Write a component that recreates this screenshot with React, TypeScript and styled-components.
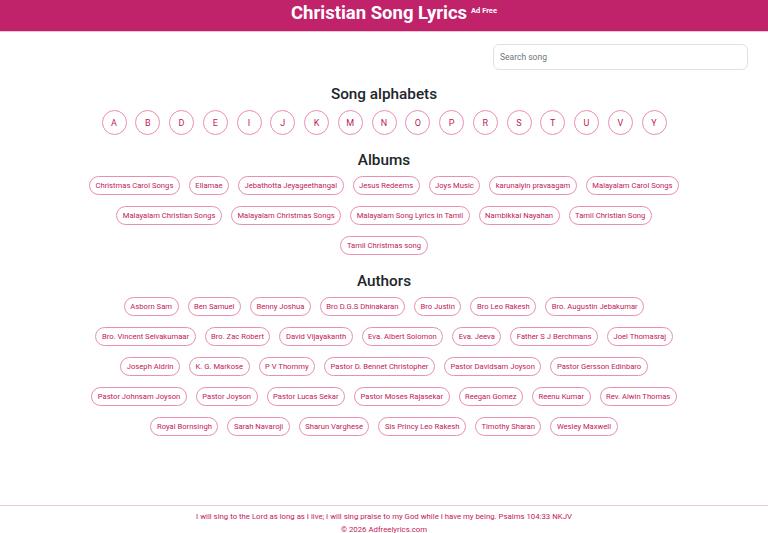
import React from "react";
import styled, { createGlobalStyle } from "styled-components";

const Global = createGlobalStyle`
  html, body { margin: 0; padding: 0; background: #fff; }
  body { font-family: Roboto, "Noto Sans", sans-serif; color: #212529; }
  * { box-sizing: border-box; }
`;

const PINK = "#c1236a";
const TEXT_PINK = "#c2185b";
const PINK_BORDER = "#e98fb5";

const Page = styled.div`
  display: flex;
  flex-direction: column;
  width: 768px;
`;

const Header = styled.header`
  height: 32px;
  background: ${PINK};
  border-bottom: 1px solid #f5c2d6;
  display: flex;
  justify-content: center;
  align-items: flex-start;
  padding-left: 20px;
  padding-top: 3px;
`;

const Title = styled.h1`
  margin: 0;
  color: #fff;
  font-family: Roboto, sans-serif;
  font-weight: 700;
  font-size: 18.5px;
  line-height: 20px;
`;

const Sup = styled.sup`
  font-size: 7.5px;
  font-weight: 700;
  vertical-align: top;
  position: relative;
  top: -2px;
  margin-left: 4px;
`;

const Main = styled.main`
  display: flex;
  flex-direction: column;
  align-items: center;
  padding: 12px 20px 69px;
`;

const SearchRow = styled.div`
  align-self: stretch;
  display: flex;
  justify-content: flex-end;
`;

const SearchInput = styled.input`
  width: 255px;
  height: 26px;
  border: 1px solid #dee2e6;
  border-radius: 6px;
  padding: 0 6px;
  font-family: Roboto, sans-serif;
  font-size: 8.5px;
  color: #333;
  outline: none;
  &::placeholder { color: #6c757d; }
`;

const Heading = styled.h2<{ $top: number }>`
  margin: ${(p) => p.$top}px 0 6px;
  font-family: Roboto, sans-serif;
  font-weight: 500;
  font-size: 15.3px;
  line-height: 20px;
  color: #212529;
`;

const CircleRow = styled.div`
  display: flex;
  gap: 8.75px;
  justify-content: center;
`;

const Circle = styled.a`
  width: 25px;
  height: 25px;
  border-radius: 50%;
  border: 1px solid ${PINK_BORDER};
  display: flex;
  align-items: center;
  justify-content: center;
  color: ${TEXT_PINK};
  font-size: 9px;
  text-decoration: none;
`;

const PillRows = styled.div`
  display: flex;
  flex-direction: column;
  gap: 11px;
  align-items: center;
`;

const PillRow = styled.div`
  display: flex;
  gap: 9px;
  justify-content: center;
`;

const Pill = styled.a`
  height: 19px;
  border: 1px solid ${PINK_BORDER};
  border-radius: 10px;
  padding: 0 5.5px;
  display: flex;
  align-items: center;
  color: ${TEXT_PINK};
  font-size: 7.65px;
  white-space: nowrap;
  text-decoration: none;
`;

const Footer = styled.footer`
  border-top: 1px solid #f5c2d6;
  padding-top: 5px;
  display: flex;
  flex-direction: column;
  align-items: center;
  color: ${TEXT_PINK};
  font-size: 7.8px;
  line-height: 12.5px;
`;

const letters = ["A","B","D","E","I","J","K","M","N","O","P","R","S","T","U","V","Y"];

const albums = [
  ["Christmas Carol Songs","Ellamae","Jebathotta Jeyageethangal","Jesus Redeems","Joys Music","karunaiyin pravaagam","Malayalam Carol Songs"],
  ["Malayalam Christian Songs","Malayalam Christmas Songs","Malayalam Song Lyrics in Tamil","Nambikkai Nayahan","Tamil Christian Song"],
  ["Tamil Christmas song"],
];

const authors = [
  ["Asborn Sam","Ben Samuel","Benny Joshua","Bro D.G.S Dhinakaran","Bro Justin","Bro Leo Rakesh","Bro. Augustin Jebakumar"],
  ["Bro. Vincent Selvakumaar","Bro. Zac Robert","David Vijayakanth","Eva. Albert Solomon","Eva. Jeeva","Father S J Berchmans","Joel Thomasraj"],
  ["Joseph Aldrin","K. G. Markose","P V Thommy","Pastor D. Bennet Christopher","Pastor Davidsam Joyson","Pastor Gersson Edinbaro"],
  ["Pastor Johnsam Joyson","Pastor Joyson","Pastor Lucas Sekar","Pastor Moses Rajasekar","Reegan Gomez","Reenu Kumar","Rev. Alwin Thomas"],
  ["Royal Bornsingh","Sarah Navaroji","Sharun Varghese","Sis Princy Leo Rakesh","Timothy Sharan","Wesley Maxwell"],
];

const Rows = ({ rows }: { rows: string[][] }) => (
  <PillRows>
    {rows.map((r, i) => (
      <PillRow key={i}>
        {r.map((t) => (
          <Pill key={t} href="#">{t}</Pill>
        ))}
      </PillRow>
    ))}
  </PillRows>
);

export default function App() {
  return (
    <Page>
      <Global />
      <Header>
        <Title>
          Christian Song Lyrics<Sup>Ad Free</Sup>
        </Title>
      </Header>
      <Main>
        <SearchRow>
          <SearchInput placeholder="Search song" />
        </SearchRow>
        <Heading $top={14}>Song alphabets</Heading>
        <CircleRow>
          {letters.map((l) => (
            <Circle key={l} href="#">{l}</Circle>
          ))}
        </CircleRow>
        <Heading $top={15}>Albums</Heading>
        <Rows rows={albums} />
        <Heading $top={16}>Authors</Heading>
        <Rows rows={authors} />
      </Main>
      <Footer>
        <div>I will sing to the Lord as long as I live; I will sing praise to my God while I have my being. Psalms 104:33 NKJV</div>
        <div>© 2026 Adfreelyrics.com</div>
      </Footer>
    </Page>
  );
}
